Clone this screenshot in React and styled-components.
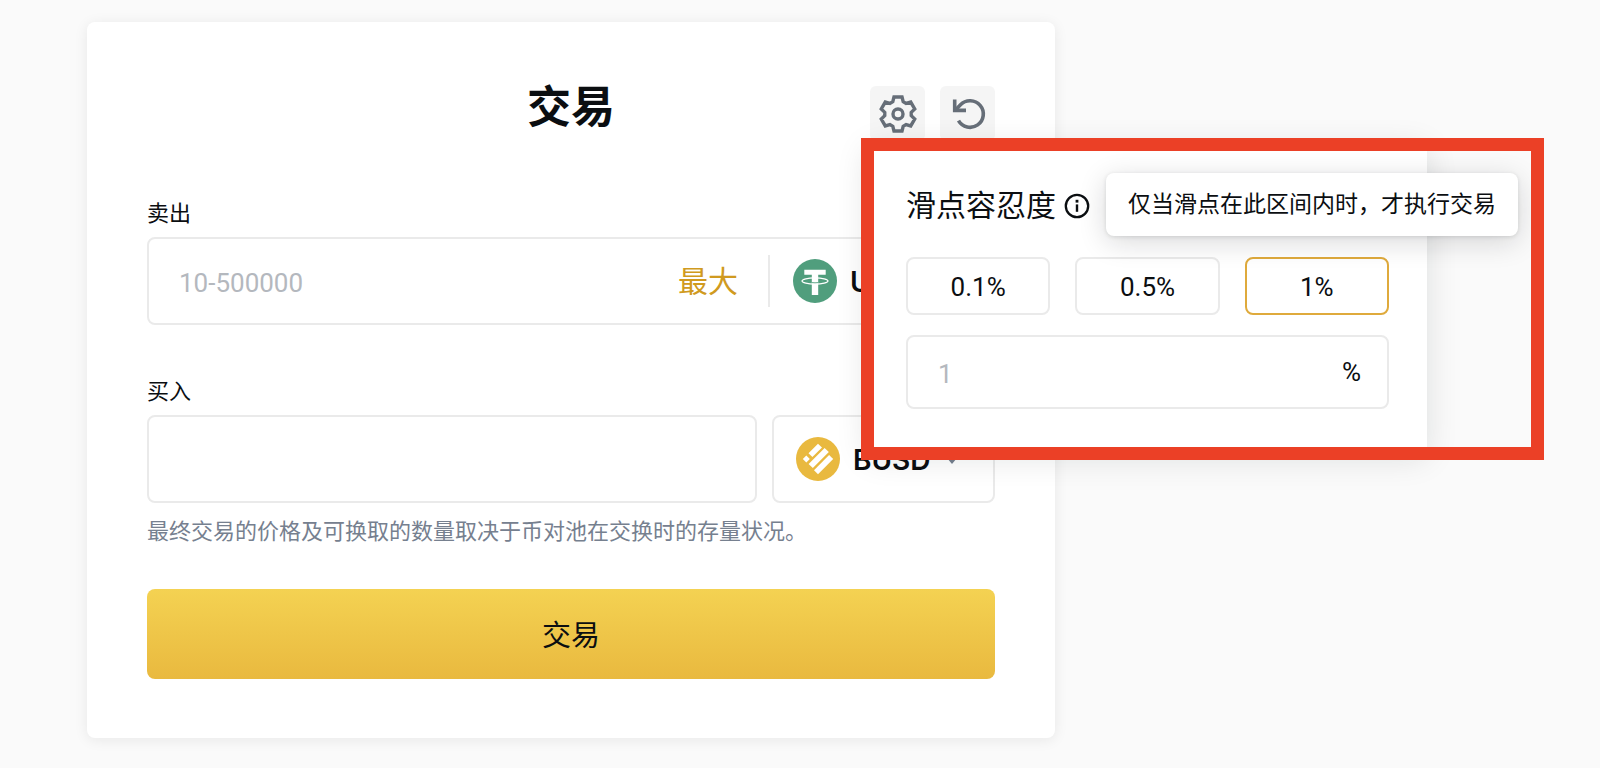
import React, { useState } from "react";
import styled, { createGlobalStyle } from "styled-components";

const GlobalStyle = createGlobalStyle`
  *, *::before, *::after { box-sizing: border-box; }
  body {
    margin: 0;
    background: #fafafa;
    color: #0b0e11;
    font-family: Roboto, "Noto Sans CJK SC", sans-serif;
  }
  button, input, select { font: inherit; color: inherit; }
`;

const Page = styled.main`
  padding: 22px 87px 30px;
`;

const Card = styled.section`
  position: relative;
  max-width: 968px;
  padding: 64px 60px 59px;
  background: #fff;
  border-radius: 8px;
  box-shadow: 0 2px 14px rgba(20, 21, 26, 0.08);
`;

const Header = styled.header`
  display: grid;
  grid-template-columns: 1fr auto 1fr;
  align-items: start;
  margin-bottom: 58px;
`;

const Title = styled.h1`
  grid-column: 2;
  margin: 0;
  font-size: 44px;
  line-height: 44px;
  font-weight: 700;
`;

const Actions = styled.div`
  display: flex;
  justify-content: flex-end;
  gap: 15px;
`;

const IconButton = styled.button`
  display: grid;
  place-items: center;
  width: 55px;
  height: 55px;
  padding: 0;
  border: 0;
  border-radius: 6px;
  background: #f5f5f5;
  color: #666e78;
`;

const Label = styled.label`
  display: block;
  width: fit-content;
  margin-bottom: 8px;
  font-size: 22px;
  line-height: 30px;
`;

const Field = styled.div`
  display: flex;
  align-items: center;
  flex: ${(p) => (p.$grow ? "1" : "none")};
  min-width: 0;
  height: ${(p) => p.$height || 88}px;
  padding: 0 ${(p) => p.$pad || 0}px;
  border: 2px solid #eaeaea;
  border-radius: 8px;
  background: #fff;
`;

const FieldRow = styled.div`
  display: flex;
  gap: 15px;
`;

const AmountInput = styled.input`
  flex: 1;
  min-width: 0;
  width: 100%;
  height: 100%;
  padding: 3px 30px 0;
  border: 0;
  outline: 0;
  background: transparent;
  font-size: 26px;
  &::placeholder { color: #b4b8be; opacity: 1; }
`;

const MaxButton = styled.button`
  padding: 2px 0 0;
  border: 0;
  background: none;
  color: #d09a20;
  font-size: 30px;
  line-height: 40px;
`;

const Divider = styled.span`
  width: 2px;
  height: 52px;
  margin: 0 23px 0 30px;
  background: #eaeaea;
`;

const TokenPicker = styled.div`
  display: flex;
  align-items: center;
  gap: 13px;
  width: ${(p) => p.$width}px;
`;

const TokenSelect = styled.select`
  appearance: none;
  padding: 2px 0 0;
  border: 0;
  outline: 0;
  background: transparent;
  font-family: Inter, "Noto Sans CJK SC", sans-serif;
  font-size: 28px;
  line-height: 40px;
  font-weight: 600;
`;

const Caret = styled.svg`
  margin-left: 2px;
`;

const BuyBlock = styled.div`
  margin-top: 52px;
`;

const Note = styled.p`
  margin: 14px 0 42px;
  color: #76808f;
  font-size: 22px;
  line-height: 30px;
`;

const Submit = styled.button`
  display: block;
  width: 100%;
  height: 90px;
  padding: 0 0 2px;
  border: 0;
  border-radius: 8px;
  background: linear-gradient(#f4d252, #e9b93f);
  font-size: 29px;
`;

/* The red callout frame is painted above the popover that it surrounds. */
const Callout = styled.div`
  position: absolute;
  z-index: 1;
  top: 116px;
  left: 774px;
  width: 683px;
  padding: 6px 117px 6px 6px;
  &::after {
    content: "";
    position: absolute;
    inset: 0;
    border: 13px solid #eb4026;
    pointer-events: none;
  }
`;

const Popover = styled.div`
  padding: 42px 38px 45px 39px;
  background: #fff;
  border-radius: 6px;
  box-shadow: 0 4px 32px rgba(20, 21, 26, 0.12);
`;

const PopoverHead = styled.div`
  display: flex;
  align-items: center;
  gap: 7px;
  margin-bottom: 31px;
`;

const PopoverTitle = styled.h2`
  margin: 0;
  font-size: 30px;
  line-height: 40px;
  font-weight: 400;
`;

const Tooltip = styled.div`
  position: absolute;
  top: 35px;
  right: 26px;
  padding: 13px 22px 12px;
  border-radius: 8px;
  background: #fff;
  box-shadow: 0 6px 28px rgba(20, 21, 26, 0.16), 0 1px 4px rgba(20, 21, 26, 0.12);
  font-size: 23px;
  line-height: 38px;
  white-space: nowrap;
`;

const Presets = styled.div`
  display: grid;
  grid-template-columns: repeat(3, 1fr);
  gap: 25px;
  margin-bottom: 20px;
`;

const Preset = styled.button`
  height: 58px;
  padding: 2px 0 0;
  border: 2px solid ${(p) => (p.$active ? "#dfaa3c" : "#eaeaea")};
  border-radius: 8px;
  background: transparent;
  font-size: 26px;
`;

const Unit = styled.span`
  padding-right: 26px;
  font-size: 26px;
`;

const toothPoints = [[-5.2, -12.3], [-4, -17], [4, -17], [5.2, -12.3]];
const gearPoints = Array.from({ length: 6 }, (_, i) => {
  const a = (i * Math.PI) / 3;
  return toothPoints.map(([x, y]) =>
    [x * Math.cos(a) - y * Math.sin(a), x * Math.sin(a) + y * Math.cos(a)].map((n) => n.toFixed(2)).join(",")
  );
}).flat().join(" ");

const GearIcon = () => (
  <svg width="40" height="40" viewBox="-20 -20 40 40" fill="none" stroke="currentColor" aria-hidden="true">
    <polygon points={gearPoints} strokeWidth="3.4" strokeLinejoin="miter" />
    <circle r="5" strokeWidth="3.4" />
  </svg>
);

const ResetIcon = () => (
  <svg width="40" height="40" viewBox="-22 -20 40 40" fill="none" stroke="currentColor" strokeWidth="3.6" aria-hidden="true">
    <path d="M-15.3 -14.6V-3.6H-4" />
    <path d="M-15 -3.6L-9.5 -9.3A13.3 13.3 0 1 1 -11.5 6.7" />
  </svg>
);

const InfoIcon = () => (
  <svg width="28" height="28" viewBox="-14 -14 28 28" aria-hidden="true">
    <circle r="11.2" fill="none" stroke="#0b0e11" strokeWidth="2.3" />
    <rect x="-1.2" y="-1.6" width="2.4" height="7.4" fill="#0b0e11" />
    <rect x="-1.4" y="-6.2" width="2.8" height="2.8" fill="#0b0e11" />
  </svg>
);

const UsdtIcon = () => (
  <svg width="44" height="44" viewBox="-22 -22 44 44" aria-hidden="true">
    <circle r="22" fill="#509e7d" />
    <path d="M-10.7 -11.3H10.7V-6.2H3.2V14H-3.2V-6.2H-10.7Z" fill="#fff" />
    <ellipse cy="0" rx="13" ry="3.1" fill="none" stroke="#fff" strokeWidth="1.2" />
    <path d="M-3.2 1.6Q0 2 3.2 1.6" fill="none" stroke="#509e7d" strokeWidth="0.9" />
  </svg>
);

const BusdIcon = () => (
  <svg width="44" height="44" viewBox="-22 -22 44 44" aria-hidden="true">
    <circle r="22" fill="#e9b93f" />
    <g fill="#fff">
      <polygon points="-9.5,-5.8 0,-15.3 4,-11.4 -5.6,-1.9" />
      <polygon points="-15.2,0 -11.7,-3.5 -8.2,0 -11.7,3.5" />
      <polygon points="-9.4,4.9 6.6,-10.9 10.8,-6.9 -5.2,9" />
      <polygon points="-4,11.2 11.1,-4 15.2,0 0,15.2" />
    </g>
  </svg>
);

const presets = ["0.1%", "0.5%", "1%"];

export default function App() {
  const [active, setActive] = useState("1%");
  return (
    <>
      <GlobalStyle />
      <Page>
        <Card>
          <Header>
            <Title>交易</Title>
            <Actions>
              <IconButton type="button" aria-label="设置"><GearIcon /></IconButton>
              <IconButton type="button" aria-label="重置"><ResetIcon /></IconButton>
            </Actions>
          </Header>

          <Label htmlFor="sell">卖出</Label>
          <Field>
            <AmountInput id="sell" placeholder="10-500000" />
            <MaxButton type="button">最大</MaxButton>
            <Divider />
            <TokenPicker $width={200}>
              <UsdtIcon />
              <TokenSelect aria-label="卖出币种"><option>USDT</option></TokenSelect>
            </TokenPicker>
          </Field>

          <BuyBlock>
            <Label htmlFor="buy">买入</Label>
            <FieldRow>
              <Field $grow>
                <AmountInput id="buy" />
              </Field>
              <Field $pad={22}>
                <TokenPicker $width={175}>
                  <BusdIcon />
                  <TokenSelect aria-label="买入币种"><option>BUSD</option></TokenSelect>
                  <Caret width="12" height="12" viewBox="0 0 12 12" aria-hidden="true">
                    <path d="M1 5L6 11L11 5Z" fill="#76808f" />
                  </Caret>
                </TokenPicker>
              </Field>
            </FieldRow>
          </BuyBlock>
          <Note>最终交易的价格及可换取的数量取决于币对池在交换时的存量状况。</Note>
          <Submit type="button">交易</Submit>

          <Callout>
            <Popover>
              <PopoverHead>
                <PopoverTitle>滑点容忍度</PopoverTitle>
                <InfoIcon />
              </PopoverHead>
              <Presets>
                {presets.map((p) => (
                  <Preset key={p} type="button" $active={p === active} onClick={() => setActive(p)}>{p}</Preset>
                ))}
              </Presets>
              <Field $height={74}>
                <AmountInput aria-label="滑点容忍度" placeholder="1" />
                <Unit>%</Unit>
              </Field>
            </Popover>
            <Tooltip role="tooltip">仅当滑点在此区间内时，才执行交易</Tooltip>
          </Callout>
        </Card>
      </Page>
    </>
  );
}
